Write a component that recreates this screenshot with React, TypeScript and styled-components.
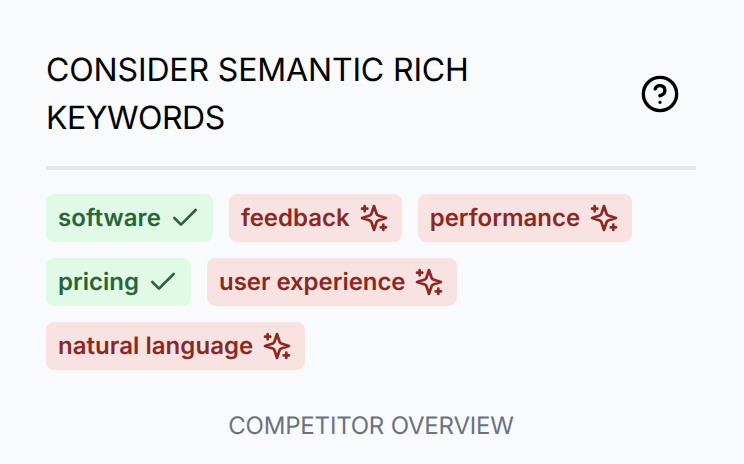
import React from 'react';
import styled, { createGlobalStyle } from 'styled-components';

const GlobalStyle = createGlobalStyle`
  * { box-sizing: border-box; }
  body {
    margin: 0;
    background: #f9fafc;
    font-family: Inter, sans-serif;
    text-rendering: geometricPrecision;
  }
`;
const Panel = styled.main`
  height: 464px;
  padding: 46px 48px 0 46px;
  overflow: hidden;
  display: flex;
  flex-direction: column;
`;
const Header = styled.header`
  display: flex;
  justify-content: space-between;
  align-items: center;
  height: 124px;
  padding: 0 16px 24px 0;
  border-bottom: 4px solid #e5e7eb;
`;
const Title = styled.h2`
  margin: 0;
  width: 480px;
  font-size: 32px;
  line-height: 48px;
  font-weight: 400;
  color: #000;
`;
const TitleWords = styled.span<{ $tracking: number }>`
  letter-spacing: ${p => p.$tracking}px;
`;
const Tags = styled.div`
  display: flex;
  flex-wrap: wrap;
  gap: 16px;
  margin-top: 24px;
`;
const Tag = styled.span<{ $used: boolean; $tracking: number }>`
  display: inline-flex;
  align-items: center;
  gap: 8px;
  height: 48px;
  padding: 0 12px;
  border-radius: 8px;
  font-size: 24px;
  font-weight: 600;
  line-height: 32px;
  letter-spacing: ${p => p.$tracking}px;
  color: ${p => (p.$used ? '#2b633a' : '#8c2822')};
  background: ${p => (p.$used ? '#e1fae7' : '#f8e3e2')};
`;
const Footer = styled.footer`
  margin-top: 40px;
  text-align: center;
  font-size: 24px;
  line-height: 32px;
  letter-spacing: -0.2px;
  color: #6b7280;
`;
const Icon = styled.svg<{ $size: number }>`
  width: ${p => p.$size}px;
  height: ${p => p.$size}px;
  flex: none;
  fill: none;
  stroke: currentColor;
  stroke-width: 2;
  stroke-linecap: round;
  stroke-linejoin: round;
`;

const Check = () => (
  <Icon $size={32} viewBox="0 0 24 24"><path d="M20 6 9 17l-5-5" /></Icon>
);
const Sparkles = () => (
  <Icon $size={32} viewBox="0 0 24 24">
    <path d="m12 3-1.912 5.813a2 2 0 0 1-1.275 1.275L3 12l5.813 1.912a2 2 0 0 1 1.275 1.275L12 21l1.912-5.813a2 2 0 0 1 1.275-1.275L21 12l-5.813-1.912a2 2 0 0 1-1.275-1.275L12 3Z M5 3v4 M3 5h4 M19 17v4 M17 19h4" />
  </Icon>
);
const Help = () => (
  <Icon $size={40} viewBox="0 0 24 24">
    <circle cx="12" cy="12" r="10" />
    <path d="M9.09 9a3 3 0 0 1 5.83 1c0 2-3 3-3 3 M12 17h.01" />
  </Icon>
);

const keywords = [
  { text: 'software', used: true, tracking: 0.09 },
  { text: 'feedback', used: false, tracking: 0 },
  { text: 'performance', used: false, tracking: 0 },
  { text: 'pricing', used: true, tracking: 0 },
  { text: 'user experience', used: false, tracking: -0.05 },
  { text: 'natural language', used: false, tracking: 0.05 },
];

export default function App() {
  return (
    <>
      <GlobalStyle />
      <Panel>
        <Header>
          <Title>
            <TitleWords $tracking={-0.14}>CONSIDER SEMANTIC RICH</TitleWords>{' '}
            <TitleWords $tracking={-0.5}>KEYWORDS</TitleWords>
          </Title>
          <Help />
        </Header>
        <Tags>
          {keywords.map(k => (
            <Tag key={k.text} $used={k.used} $tracking={k.tracking}>
              {k.text}
              {k.used ? <Check /> : <Sparkles />}
            </Tag>
          ))}
        </Tags>
        <Footer>COMPETITOR OVERVIEW</Footer>
      </Panel>
    </>
  );
}
